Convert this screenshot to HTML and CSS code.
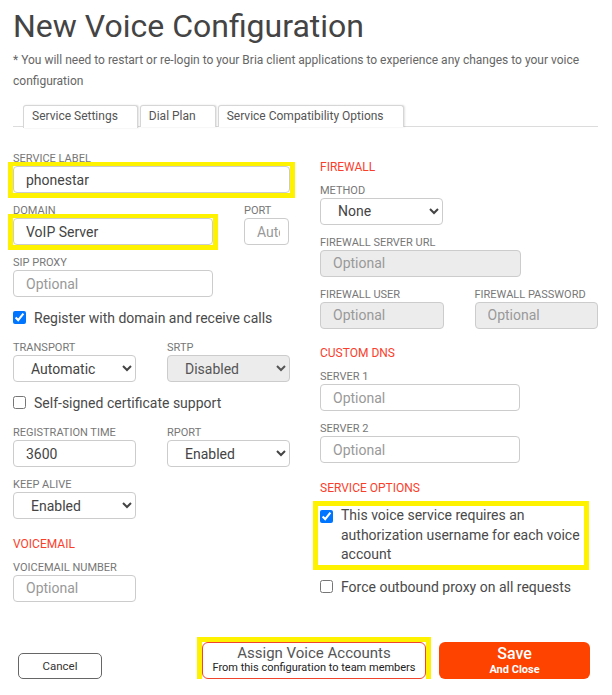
FILE: index.html
```html
<!DOCTYPE html>
<html lang="en">
<head>
<meta charset="UTF-8">
<title>New Voice Configuration</title>
<link rel="stylesheet" href="styles.css">
</head>
<body>

<h1 class="title">New Voice Configuration</h1>
<p class="note">* You will need to restart or re-login to your Bria client applications to experience any changes to your voice configuration</p>

<div class="tabs">
  <div class="tab active">Service Settings</div>
  <div class="tab">Dial Plan</div>
  <div class="tab">Service Compatibility Options</div>
</div>

<div class="form">
  <div class="col">
    <div class="field">
      <label>Service Label</label>
      <div class="hl-box"><input class="full" type="text" value="phonestar"></div>
    </div>
    <div class="split domain-row">
      <div class="field">
        <label>Domain</label>
        <div class="hl-box"><input class="full" type="text" value="VoIP Server"></div>
      </div>
      <div class="field">
        <label>Port</label>
        <input class="full" type="text" placeholder="Auto">
      </div>
    </div>
    <div class="field">
      <label>SIP Proxy</label>
      <input class="w200" type="text" placeholder="Optional">
    </div>
    <div class="check"><input type="checkbox" checked><span>Register with domain and receive calls</span></div>
    <div class="split">
      <div class="field">
        <label>Transport</label>
        <select class="full"><option>Automatic</option></select>
      </div>
      <div class="field">
        <label>SRTP</label>
        <select class="full" disabled><option>Disabled</option></select>
      </div>
    </div>
    <div class="check"><input type="checkbox"><span>Self-signed certificate support</span></div>
    <div class="split">
      <div class="field">
        <label>Registration Time</label>
        <input class="full" type="text" value="3600">
      </div>
      <div class="field">
        <label>RPort</label>
        <select class="full"><option>Enabled</option></select>
      </div>
    </div>
    <div class="field">
      <label>Keep Alive</label>
      <select class="w123"><option>Enabled</option></select>
    </div>
    <h3 class="section">Voicemail</h3>
    <div class="field">
      <label>Voicemail Number</label>
      <input class="w123" type="text" placeholder="Optional">
    </div>
  </div>

  <div class="col">
    <h3 class="section first">Firewall</h3>
    <div class="field">
      <label>Method</label>
      <select class="w123"><option>None</option></select>
    </div>
    <div class="field">
      <label>Firewall Server URL</label>
      <input class="w201" type="text" placeholder="Optional" disabled>
    </div>
    <div class="split">
      <div class="field">
        <label>Firewall User</label>
        <input class="full" type="text" placeholder="Optional" disabled>
      </div>
      <div class="field">
        <label>Firewall Password</label>
        <input class="full" type="text" placeholder="Optional" disabled>
      </div>
    </div>
    <h3 class="section">Custom DNS</h3>
    <div class="field">
      <label>Server 1</label>
      <input class="w200" type="text" placeholder="Optional">
    </div>
    <div class="field">
      <label>Server 2</label>
      <input class="w200" type="text" placeholder="Optional">
    </div>
    <h3 class="section">Service Options</h3>
    <div class="check multi"><input type="checkbox" checked><span>This voice service requires an authorization username for each voice account</span></div>
    <div class="check force"><input type="checkbox"><span>Force outbound proxy on all requests</span></div>
  </div>
</div>

<div class="footer">
  <button class="btn-cancel">Cancel</button>
  <div class="hl-box assign-box">
    <button class="btn-assign">
      <span class="big">Assign Voice Accounts</span>
      <span class="small">From this configuration to team members</span>
    </button>
  </div>
  <button class="btn-save">
    <span class="big">Save</span>
    <span class="small">And Close</span>
  </button>
</div>

</body>
</html>
```

FILE: styles.css
```css
* { margin: 0; padding: 0; box-sizing: border-box; }

body {
  font-family: Roboto, "Liberation Sans", sans-serif;
  background: #fff;
  color: #444;
  padding: 8px 14px 0 13px;
}

.title {
  font-size: 32px;
  font-weight: 400;
  line-height: 36px;
  color: #444;
}

.note {
  margin-top: 6px;
  font-size: 12px;
  line-height: 21px;
  color: #666;
}

.tabs {
  display: flex;
  gap: 2px;
  margin-top: 13px;
  padding-left: 10px;
  height: 22px;
  border-bottom: 1px solid #dcdcdc;
}

.tab {
  height: 22px;
  line-height: 21px;
  padding: 0 19px 0 8px;
  font-size: 12px;
  color: #555;
  background: #fff;
  border: 1px solid #d6d6d6;
  border-bottom: none;
  border-radius: 3px 3px 0 0;
  box-shadow: 1px 0 2px rgba(0,0,0,0.12);
}
.tab.active { height: 23px; }

.form {
  display: grid;
  grid-template-columns: 277px 1fr;
  column-gap: 30px;
  margin-top: 22px;
  align-items: start;
}

.field { margin-bottom: 8px; }

.field label {
  display: block;
  font-size: 11px;
  line-height: 15px;
  padding-top: 2px;
  text-transform: uppercase;
  color: #777;
}

input[type=text], select {
  display: block;
  height: 27px;
  border: 1px solid #ccc;
  border-radius: 4px;
  background: #fff;
  font-family: inherit;
  font-size: 14px;
  color: #444;
  padding: 0 8px 0 12px;
}
select { padding-left: 13px; }
input::placeholder { color: #999; }
input:disabled, select:disabled { background: #ececec; color: #555; opacity: 1; }

.full { width: 100%; }
.w123 { width: 123px; }
.w200 { width: 200px; }
.w201 { width: 201px; }

.split {
  display: grid;
  grid-template-columns: 1fr 1fr;
  column-gap: 31px;
  margin-bottom: 8px;
}
.split .field { margin-bottom: 0; }
.split.domain-row { grid-template-columns: 200px 45px; }

/* yellow highlight boxes */
.hl-box {
  border: 5px solid #fff200;
  border-top-width: 4px;
  margin: -4px -5px -5px;
}

.check {
  display: flex;
  align-items: center;
  height: 20px;
  margin: 10.5px 0 10.5px;
  font-size: 14px;
  color: #4a4a4a;
}
.check input {
  width: 13px;
  height: 13px;
  margin: 0 8px 0 0;
  flex-shrink: 0;
}

.check.multi {
  height: auto;
  align-items: flex-start;
  width: 266px;
  margin: 10.5px 0 0 -2px;
  padding-left: 2px;
  line-height: 19.5px;
  outline: 5px solid #fff200;
}
.check.multi input { margin-top: 4px; }
.check.force { margin-top: 12px; }

.section {
  font-size: 12px;
  font-weight: 400;
  line-height: 15px;
  color: #fa3e2c;
  text-transform: uppercase;
  margin: 17.5px 0 6px;
}
.section.first { margin-top: 10.5px; }

.footer {
  display: flex;
  align-items: flex-end;
  margin-top: 27px;
}

button {
  font-family: inherit;
  cursor: pointer;
}

.btn-cancel {
  width: 84px;
  height: 26px;
  margin-left: 5px;
  background: #fff;
  border: 1px solid #666;
  border-radius: 5px;
  font-size: 11.5px;
  color: #333;
}

.assign-box {
  margin: 0 0 -5px auto;
  border-width: 5px;
}

.btn-assign, .btn-save {
  display: flex;
  flex-direction: column;
  align-items: center;
  justify-content: center;
  height: 37px;
  border-radius: 6px;
}

.btn-assign {
  width: 224px;
  background: #fff;
  border: 1px solid #f0442c;
}
.btn-assign .big { font-size: 15px; line-height: 16px; color: #555; }
.btn-assign .small { font-size: 11px; line-height: 14px; color: #222; }

.btn-save {
  width: 151px;
  margin: 0 8px 0 8px;
  background: #fe4200;
  border: none;
  color: #fff;
}
.btn-save .big { font-size: 16px; line-height: 18px; font-weight: 500; }
.btn-save .small { font-size: 11px; line-height: 13px; font-weight: 700; }
```
